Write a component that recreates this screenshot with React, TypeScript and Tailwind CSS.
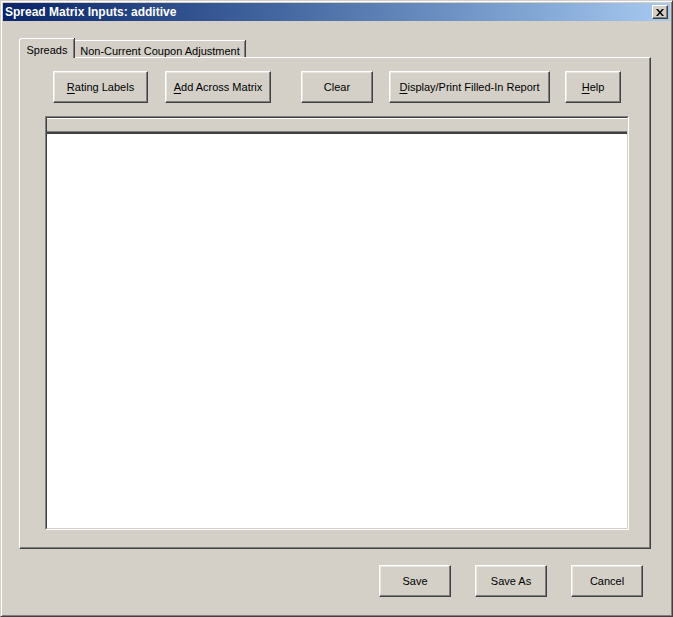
import React from 'react';

const font = { fontFamily: '"Liberation Sans", Arial, sans-serif' };

function WinButton({ label, u, className = '' }: { label: string; u?: number; className?: string }) {
    const text =
        u === undefined ? (
            label
        ) : (
            <>
                {label.slice(0, u)}
                <span className="underline underline-offset-2">{label[u]}</span>
                {label.slice(u + 1)}
            </>
        );
    return (
        <button
            type="button"
            className={`h-[32px] shrink-0 bg-[#d4d0c8] text-[11px] text-black whitespace-nowrap border border-t-white border-l-white border-r-[#404040] border-b-[#404040] shadow-[inset_-1px_-1px_0_#808080,inset_1px_1px_0_#e8e6e0] ${className}`}
        >
            {text}
        </button>
    );
}

export default function App() {
    return (
        <div
            style={font}
            className="w-[673px] h-[617px] bg-[#d4d0c8] border border-t-[#d4d0c8] border-l-[#d4d0c8] border-r-[#404040] border-b-[#404040] shadow-[inset_1px_1px_0_#fff,inset_-1px_-1px_0_#808080] p-[2px] flex flex-col overflow-hidden"
        >
            {/* Title bar */}
            <div className="h-[18px] shrink-0 flex items-center justify-between pl-[2px] pr-[2px] bg-gradient-to-r from-[#0a246a] to-[#a6caf0]">
                <span className="text-white font-bold text-[12px] leading-none">Spread Matrix Inputs: additive</span>
                <button
                    type="button"
                    className="w-[16px] h-[14px] flex items-center justify-center bg-[#d4d0c8] border border-t-white border-l-white border-r-[#404040] border-b-[#404040] shadow-[inset_-1px_-1px_0_#808080]"
                >
                    <svg width="8" height="7" viewBox="0 0 8 7">
                        <path d="M0 0h2l2 2.5L6 0h2L5 3.5 8 7H6L4 4.5 2 7H0l3-3.5z" fill="#000" />
                    </svg>
                </button>
            </div>

            {/* Tabs */}
            <div className="mt-[17px] ml-[16px] flex items-end h-[19px] relative z-10">
                <div className="h-[20px] -mb-px w-[55px] bg-[#d4d0c8] border-l border-t border-white rounded-tl-[3px] shadow-[inset_-1px_0_0_#808080,1px_0_0_#404040] flex items-start justify-center pt-[3px] text-[11px] text-black whitespace-nowrap">
                    Spreads
                </div>
                <div className="h-[17px] w-[170px] ml-px bg-[#d4d0c8] border-t border-white shadow-[inset_-1px_0_0_#808080,1px_0_0_#404040] flex items-start justify-center pt-[2px] text-[11px] text-black whitespace-nowrap">
                    Non-Current Coupon Adjustment
                </div>
            </div>

            {/* Tab panel */}
            <div className="ml-[16px] w-[632px] h-[492px] shrink-0 border border-t-white border-l-white border-r-[#404040] border-b-[#404040] shadow-[inset_-1px_-1px_0_#808080] flex flex-col">
                <div className="flex pt-[13px] pl-[33px]">
                    <WinButton label="Rating Labels" u={0} className="w-[95px]" />
                    <WinButton label="Add Across Matrix" u={0} className="ml-[17px] w-[106px]" />
                    <WinButton label="Clear" className="ml-[30px] w-[72px]" />
                    <WinButton label="Display/Print Filled-In Report" u={0} className="ml-[16px] w-[161px]" />
                    <WinButton label="Help" u={0} className="ml-[15px] w-[56px]" />
                </div>

                {/* Grid */}
                <div className="mt-[13px] ml-[25px] w-[584px] h-[414px] border border-t-[#808080] border-l-[#808080] border-r-white border-b-white flex flex-col">
                    <div className="flex-1 flex flex-col border border-t-[#404040] border-l-[#404040] border-r-[#d4d0c8] border-b-[#d4d0c8]">
                        <div className="h-[16px] shrink-0 bg-[#d4d0c8] border-t border-white border-b-2 border-b-[#404040] shadow-[inset_0_-1px_0_#808080]" />
                        <div className="flex-1 bg-white" />
                    </div>
                </div>
            </div>

            {/* Bottom buttons */}
            <div className="mt-[16px] flex justify-end gap-6 pr-[27px]">
                <WinButton label="Save" className="w-[72px]" />
                <WinButton label="Save As" className="w-[72px]" />
                <WinButton label="Cancel" className="w-[72px]" />
            </div>
        </div>
    );
}
